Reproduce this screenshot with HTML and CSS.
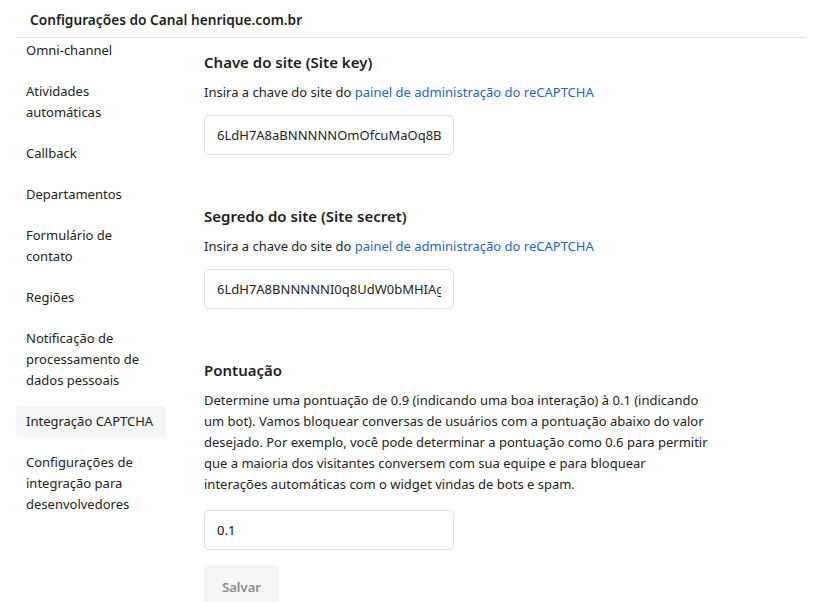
FILE: index.html
```html
<!DOCTYPE html>
<html lang="pt-BR">
<head>
<meta charset="utf-8">
<title>Configurações do Canal</title>
<link rel="stylesheet" href="styles.css">
</head>
<body>
<div class="page">
  <header class="header">Configurações do Canal henrique.com.br</header>
  <div class="layout">
    <nav class="sidebar">
      <a class="nav-item">Omni-channel</a>
      <a class="nav-item">Atividades automáticas</a>
      <a class="nav-item">Callback</a>
      <a class="nav-item">Departamentos</a>
      <a class="nav-item">Formulário de contato</a>
      <a class="nav-item">Regiões</a>
      <a class="nav-item">Notificação de processamento de dados pessoais</a>
      <a class="nav-item active">Integração CAPTCHA</a>
      <a class="nav-item">Configurações de integração para desenvolvedores</a>
    </nav>
    <main class="content">
      <section class="field">
        <h2 class="field-title">Chave do site (Site key)</h2>
        <p class="field-desc">Insira a chave do site do <a class="link">painel de administração do reCAPTCHA</a></p>
        <input class="input" type="text" value="6LdH7A8aBNNNNNOmOfcuMaOq8BxyzAbcdE">
      </section>
      <section class="field">
        <h2 class="field-title">Segredo do site (Site secret)</h2>
        <p class="field-desc">Insira a chave do site do <a class="link">painel de administração do reCAPTCHA</a></p>
        <input class="input" type="text" value="6LdH7A8BNNNNNI0q8UdW0bMHIAgxyzAbcdE">
      </section>
      <section class="field last">
        <h2 class="field-title">Pontuação</h2>
        <p class="field-desc long">Determine uma pontuação de 0.9 (indicando uma boa interação) à 0.1 (indicando um bot). Vamos bloquear conversas de usuários com a pontuação abaixo do valor desejado. Por exemplo, você pode determinar a pontuação como 0.6 para permitir que a maioria dos visitantes conversem com sua equipe e para bloquear<br>interações automáticas com o widget vindas de bots e spam.</p>
        <input class="input score" type="text" value="0.1">
      </section>
      <button class="btn">Salvar</button>
    </main>
  </div>
</div>
</body>
</html>
```
FILE: styles.css
```css
* { box-sizing: border-box; }
html, body { margin: 0; padding: 0; background: #fff; }
body {
  font-family: "Noto Sans", "Open Sans", sans-serif;
  color: #242424;
  font-size: 13px;
  overflow: hidden;
  height: 602px;
}
.page { padding: 0 16px; }
.header {
  font-size: 13.7px;
  font-weight: 600;
  color: #1f1f1f;
  padding: 10px 14px 0;
  height: 38px;
  line-height: 20px;
  border-bottom: 1px solid #e4e4e4;
}
.layout {
  display: flex;
  gap: 38px;
}
.sidebar {
  width: 150px;
  flex: none;
  display: flex;
  flex-direction: column;
  gap: 10px;
  margin-top: -3px;
}
.nav-item {
  display: block;
  padding: 5px 10px;
  line-height: 21px;
  font-size: 13px;
  color: #242424;
  border-radius: 4px;
}
.nav-item.active { background: #f5f6f8; }
.content {
  flex: 1;
  padding-top: 13px;
}
.field { margin-bottom: 50px; }
.field.last { margin-bottom: 15px; }
.field-title {
  margin: 0;
  font-size: 15px;
  font-weight: 600;
  line-height: 22px;
  color: #1f1f1f;
}
.field-desc {
  margin: 9px 0 0;
  line-height: 21px;
  font-size: 13px;
}
.field-desc.long { max-width: 517px; margin-top: 9px; }
.link { color: #1b6ac9; text-decoration: none; }
.input {
  display: block;
  margin-top: 12px;
  width: 250px;
  height: 40px;
  border: 1px solid #e2e2e2;
  border-radius: 5px;
  padding: 0 12px;
  font-family: inherit;
  font-size: 13px;
  color: #242424;
  background: #fff;
  outline: none;
}
.input.score { margin-top: 15px; color: #111; }
.btn {
  font-family: inherit;
  font-size: 13px;
  font-weight: 600;
  color: #8a8d91;
  background: #f4f5f7;
  border: none;
  border-radius: 4px;
  width: 75px;
  height: 44px;
}
```
